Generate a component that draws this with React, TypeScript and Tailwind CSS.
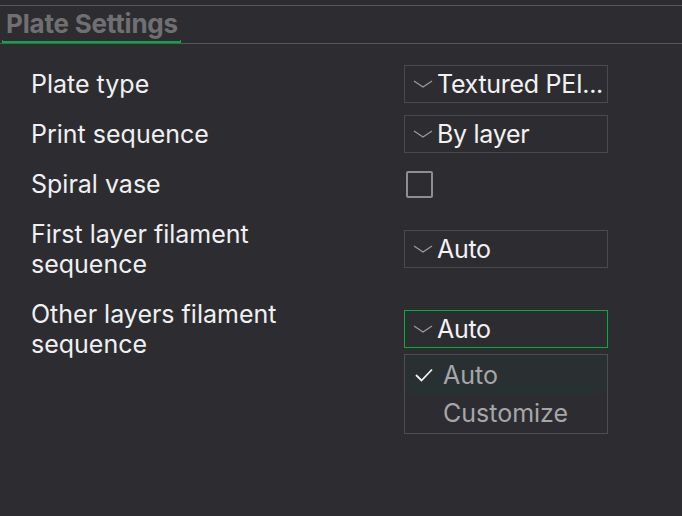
import { useState } from "react";

type Row = {
  label: string;
  kind: "combo" | "check";
  value?: string;
  active?: boolean;
};

const rows: Row[] = [
  { label: "Plate type", kind: "combo", value: "Textured PEI..." },
  { label: "Print sequence", kind: "combo", value: "By layer" },
  { label: "Spiral vase", kind: "check" },
  { label: "First layer filament sequence", kind: "combo", value: "Auto" },
  { label: "Other layers filament sequence", kind: "combo", value: "Auto", active: true },
];

function Chevron() {
  return (
    <svg width="20" height="10" viewBox="0 0 20 10" className="shrink-0">
      <path d="M1 2 L10 8 L19 2" fill="none" stroke="#9a9a9c" strokeWidth="1.3" />
    </svg>
  );
}

function Combo({ value, active }: { value: string; active?: boolean }) {
  return (
    <div
      className={`flex h-[38px] w-[204px] items-center gap-[4px] border pl-[8px] ${
        active ? "border-[#00ae42]" : "border-[#4a4a4e]"
      }`}
    >
      <Chevron />
      <span className="whitespace-nowrap text-[25px] leading-none tracking-[-0.3px] text-[#f2f2f2]">
        {value}
      </span>
    </div>
  );
}

export default function App() {
  const [vase, setVase] = useState(false);
  const [seq, setSeq] = useState("Auto");

  return (
    <div className="h-[516px] w-[682px] overflow-hidden bg-[#2d2d31] font-['Inter',sans-serif]">
      <div className="h-[5px]" />
      <div className="h-px bg-[#58585c]" />
      <div className="flex h-[37px] items-end pl-[2px]">
        <div className="flex h-full flex-col justify-between">
          <span className="pl-[4px] pt-[3px] text-[26px] font-bold leading-[30px] tracking-[-0.2px] text-[#707072]">
            Plate Settings
          </span>
          <div className="h-[3px] w-[179px] border-x border-b-2 border-[#00ae42]" />
        </div>
      </div>
      <div className="h-px bg-[#58585c]" />

      <div className="pt-[15px]">
        {rows.map((r) => (
          <div key={r.label} className="grid min-h-[50px] grid-cols-[404px_1fr] items-center">
            <div className="w-[310px] py-[10px] pl-[31px] text-[25px] leading-[30px] text-[#f0f0f0]">
              {r.label}
            </div>
            <div>
              {r.kind === "check" ? (
                <button
                  onClick={() => setVase(!vase)}
                  className="ml-[2px] block h-[27px] w-[27px] rounded-[2px] border-2 border-[#8e8e90]"
                />
              ) : (
                <Combo value={r.active ? seq : r.value!} active={r.active} />
              )}
            </div>
          </div>
        ))}
      </div>

      <div className="-mt-[15px] ml-[404px] w-[204px] border border-[#4e4e52] py-px">
        {["Auto", "Customize"].map((opt) => (
          <div
            key={opt}
            onClick={() => setSeq(opt)}
            className={`flex h-[38px] items-center pr-[3px] ${opt === seq ? "bg-[#293032]" : ""}`}
          >
            <span className="flex w-[38px] justify-center">
              {opt === seq && (
                <svg width="18" height="14" viewBox="0 0 18 14">
                  <path d="M1 7 L6.5 12.5 L17 1.5" fill="none" stroke="#f2f2f2" strokeWidth="1.8" />
                </svg>
              )}
            </span>
            <span className="text-[25px] leading-none text-[#a6a6a8]">{opt}</span>
          </div>
        ))}
      </div>
    </div>
  );
}
